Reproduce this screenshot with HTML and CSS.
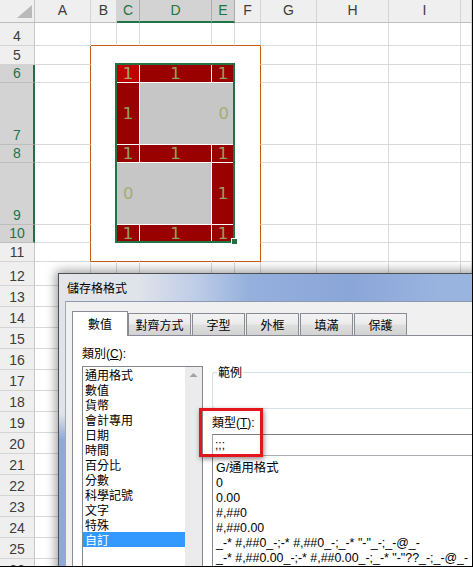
FILE: index.html
```html
<!DOCTYPE html>
<html lang="zh-Hant">
<head>
<meta charset="utf-8">
<title>儲存格格式</title>
<link rel="stylesheet" href="styles.css">
</head>
<body>
<div class="page">
  <div class="sheet">
    <div class="hd corner"><svg width="34" height="22" viewBox="0 0 34 22"><polygon points="32,5 32,18 17,18" fill="#b9b9b9"/></svg></div>
    <div class="hd">A</div><div class="hd">B</div><div class="hd on">C</div><div class="hd on">D</div><div class="hd on">E</div><div class="hd">F</div><div class="hd">G</div><div class="hd">H</div><div class="hd">I</div><div class="hd"></div>

    <div class="rh">4</div><i></i><i class="ob"></i><i class="ob"></i><i class="ob"></i><i class="ob"></i><i class="ob"></i><i></i><i></i><i></i><i></i>
    <div class="rh">5</div><i class="or"></i><i class="w"></i><i class="w"></i><i class="w"></i><i class="w"></i><i class="w or"></i><i></i><i></i><i></i><i></i>
    <div class="rh on">6</div><i class="or"></i><i class="w"></i><i class="v act">1</i><i class="v">1</i><i class="v">1</i><i class="w or"></i><i></i><i></i><i></i><i></i>
    <div class="rh on">7</div><i class="or"></i><i class="w"></i><i class="v">1</i><i class="v gy span2 to-right">0</i><i class="w or"></i><i></i><i></i><i></i><i></i>
    <div class="rh on">8</div><i class="or"></i><i class="w"></i><i class="v">1</i><i class="v">1</i><i class="v">1</i><i class="w or"></i><i></i><i></i><i></i><i></i>
    <div class="rh on">9</div><i class="or"></i><i class="w"></i><i class="v gy span2 to-left">0</i><i class="v">1</i><i class="w or"></i><i></i><i></i><i></i><i></i>
    <div class="rh on">10</div><i class="or"></i><i class="w"></i><i class="v">1</i><i class="v">1</i><i class="v">1</i><i class="w or"></i><i></i><i></i><i></i><i></i>
    <div class="rh">11</div><i class="or"></i><i class="w ob"></i><i class="w ob"></i><i class="w ob"></i><i class="w ob"></i><i class="w or ob"></i><i></i><i></i><i></i><i></i>
    <div class="rh">12</div><i></i><i></i><i></i><i></i><i></i><i></i><i></i><i></i><i></i><i></i>
    <div class="rh">13</div><i></i><i></i><i></i><i></i><i></i><i></i><i></i><i></i><i></i><i></i>
    <div class="rh">14</div><i></i><i></i><i></i><i></i><i></i><i></i><i></i><i></i><i></i><i></i>
    <div class="rh">15</div><i></i><i></i><i></i><i></i><i></i><i></i><i></i><i></i><i></i><i></i>
    <div class="rh">16</div><i></i><i></i><i></i><i></i><i></i><i></i><i></i><i></i><i></i><i></i>
    <div class="rh">17</div><i></i><i></i><i></i><i></i><i></i><i></i><i></i><i></i><i></i><i></i>
    <div class="rh">18</div><i></i><i></i><i></i><i></i><i></i><i></i><i></i><i></i><i></i><i></i>
    <div class="rh">19</div><i></i><i></i><i></i><i></i><i></i><i></i><i></i><i></i><i></i><i></i>
    <div class="rh">20</div><i></i><i></i><i></i><i></i><i></i><i></i><i></i><i></i><i></i><i></i>
    <div class="rh">21</div><i></i><i></i><i></i><i></i><i></i><i></i><i></i><i></i><i></i><i></i>
    <div class="rh">22</div><i></i><i></i><i></i><i></i><i></i><i></i><i></i><i></i><i></i><i></i>
    <div class="rh">23</div><i></i><i></i><i></i><i></i><i></i><i></i><i></i><i></i><i></i><i></i>
    <div class="rh">24</div><i></i><i></i><i></i><i></i><i></i><i></i><i></i><i></i><i></i><i></i>
    <div class="rh">25</div><i></i><i></i><i></i><i></i><i></i><i></i><i></i><i></i><i></i><i></i>
    <div class="rh">26</div><i></i><i></i><i></i><i></i><i></i><i></i><i></i><i></i><i></i><i></i>
  </div>

  <div class="selbox"></div>
  <div class="handle"></div>

  <div class="dlg">
    <div class="ttl">儲存格格式</div>
    <div class="client">
      <div class="tabs">
        <div class="tab on">數值</div>
        <div class="tab wide">對齊方式</div>
        <div class="tab">字型</div>
        <div class="tab">外框</div>
        <div class="tab">填滿</div>
        <div class="tab">保護</div>
      </div>
      <div class="panel">
        <div class="cat">
          <div class="lbl">類別(<u>C</u>):</div>
          <div class="list">
            <div class="items">
              <div>通用格式</div>
              <div>數值</div>
              <div>貨幣</div>
              <div>會計專用</div>
              <div>日期</div>
              <div>時間</div>
              <div>百分比</div>
              <div>分數</div>
              <div>科學記號</div>
              <div>文字</div>
              <div>特殊</div>
              <div class="on">自訂</div>
            </div>
            <div class="sb"><svg width="17" height="17" viewBox="0 0 17 17"><path d="M4.5 10 L8.5 6 L12.5 10 Z" fill="#a2a2a2"/></svg></div>
          </div>
        </div>
        <div class="typ">
          <div class="grp"><span>範例</span></div>
          <div class="lbl">類型(<u>T</u>):</div>
          <div class="inp">;;;</div>
          <div class="fmt">
            <div>G/通用格式</div>
            <div>0</div>
            <div>0.00</div>
            <div>#,##0</div>
            <div>#,##0.00</div>
            <div>_-* #,##0_-;-* #,##0_-;_-* "-"_-;_-@_-</div>
            <div>_-* #,##0.00_-;-* #,##0.00_-;_-* "-"??_-;_-@_-</div>
          </div>
        </div>
      </div>
    </div>
  </div>

  <div class="mark"></div>
</div>
</body>
</html>
```

FILE: styles.css
```css
* { box-sizing: border-box; margin: 0; padding: 0; }
body { margin: 0; background: #fff; font-family: "Liberation Sans", Arial, sans-serif; }

.page {
  position: relative;
  width: 473px;
  height: 567px;
  overflow: hidden;
  background: #fff;
  border-right: 1px solid #000;
  border-bottom: 1px solid #000;
}

/* ---------- spreadsheet ---------- */
.sheet {
  display: grid;
  grid-template-columns: 35px 56px 26px 23px 72px 23px 26px 56px 72px 72px 1fr;
  grid-template-rows: 23px 23px 19px 18px 62px 18px 62px 18px 19px 24px repeat(14, 21px);
}
.sheet > i {
  font-style: normal;
  background: #fff;
  border-right: 1px solid #d9d9d9;
  border-bottom: 1px solid #d9d9d9;
}

.hd {
  background: #efefef;
  border-right: 1px solid #d4d4d4;
  border-bottom: 1px solid #bdbdbd;
  color: #3c3c3c;
  font-size: 14px;
  display: flex;
  align-items: center;
  justify-content: center;
  padding-bottom: 2px;
}
.hd.corner { padding: 0; border-right-color: #c6c6c6; }
.hd.corner svg { display: block; }
.hd.on {
  background: #d3d3d3;
  color: #217346;
  border-right-color: #acacac;
  border-bottom: 2px solid #217346;
}

.rh {
  background: #efefef;
  border-right: 1px solid #c6c6c6;
  border-bottom: 1px solid #d4d4d4;
  color: #3c3c3c;
  font-size: 14px;
  line-height: 18px;
  display: flex;
  align-items: flex-end;
  justify-content: center;
}
.rh.on {
  background: #d3d3d3;
  color: #217346;
  border-bottom-color: #bdbdbd;
  border-right: 2px solid #217346;
  padding-left: 1px;
}

.sheet > i.w { border-color: #fff; }
.sheet > i.or { border-right-color: #c55a11; }
.sheet > i.ob { border-bottom-color: #c55a11; }

.sheet > i.v {
  background: #990000;
  border-color: #fff;
  color: #93a262;
  font-family: "DejaVu Sans", sans-serif;
  font-size: 16.5px;
  display: flex;
  align-items: center;
  justify-content: center;
}
.sheet > i.act { background: #c00000; color: #9cad6a; }
.sheet > i.gy { background: #c6c6c6; color: #a3ad74; }
.span2 { grid-column: span 2; }
.sheet > i.to-right { justify-content: flex-end; padding-right: 5px; }
.sheet > i.to-left { justify-content: flex-start; padding-left: 6px; }

.selbox {
  position: absolute;
  left: 115px;
  top: 63px;
  width: 120px;
  height: 180px;
  border: 2px solid #217346;
}
.handle {
  position: absolute;
  left: 231px;
  top: 238px;
  width: 7px;
  height: 7px;
  background: #217346;
  border: 1px solid #fff;
}

/* ---------- dialog ---------- */
.dlg {
  position: absolute;
  left: 58px;
  top: 273px;
  width: 432px;
  height: 320px;
  border: 1px solid #4d4f55;
  box-shadow: 0 0 10px 2px rgba(0, 0, 0, 0.4);
  background:
    linear-gradient(to right, #e3e5e9 0px, #dfe3ea 80px, #bccbe6 140px, #95b0dd 190px, #8aa6d8 290px, #9ab4e0 380px) top left / 100% 28px no-repeat,
    linear-gradient(to bottom, #e0e3e8 0px, #e0e3e8 140px, #90aad8 165px, #8ea9d8 100%);
  font-family: "Liberation Sans", "Noto Sans CJK TC", sans-serif;
  color: #000;
}
.ttl {
  height: 27px;
  line-height: 27px;
  padding-left: 8px;
  font-size: 12px;
  font-family: "Noto Sans CJK TC", sans-serif;
}
.client {
  margin-left: 6px;
  height: 300px;
  background: #f0f0f0;
  border-left: 1px solid #a3a6ab;
  border-top: 1px solid #8d99ae;
}

.tabs {
  position: relative;
  z-index: 1;
  display: flex;
  align-items: flex-end;
  height: 24px;
  margin: 9px 0 0 6px;
}
.tab {
  width: 53px;
  height: 22px;
  margin-left: 1px;
  border: 1px solid #898c95;
  border-bottom: none;
  background: linear-gradient(#f3f3f3, #ececec 45%, #dedede 55%, #d2d2d2);
  font-size: 12px;
  line-height: 21px;
  text-align: center;
  font-family: "Noto Sans CJK TC", sans-serif;
}
.tab.on {
  width: 56px;
  height: 25px;
  margin-left: 0;
  margin-bottom: -1px;
  background: #fff;
  line-height: 23px;
}
.tab.wide { width: 63px; margin-left: 0; }

.panel {
  display: flex;
  height: 300px;
  margin-left: 6px;
  border: 1px solid #898c95;
  background: #fff;
}

.lbl {
  font-size: 12px;
  line-height: 16px;
  white-space: nowrap;
}
.lbl u { text-underline-offset: 1px; }

.cat { padding-left: 9px; flex: none; }
.cat .lbl { margin-top: 10px; }
.list {
  display: flex;
  width: 121px;
  height: 230px;
  margin-top: 4px;
  border: 1px solid #828790;
}
.items {
  width: 102px;
  font-size: 12px;
  line-height: 15px;
  font-family: "Noto Sans CJK TC", sans-serif;
}
.items div { padding-left: 2px; white-space: nowrap; }
.items .on { background: #3399ff; color: #fff; }
.sb { width: 17px; background: #ebebeb; }
.sb svg { display: block; }

.typ { margin-left: 9px; width: 300px; flex: none; }
.grp {
  position: relative;
  height: 37px;
  margin-top: 36px;
  border: 1px solid #d5dfe5;
  border-right: none;
  border-radius: 3px 0 0 3px;
}
.grp span {
  position: absolute;
  left: 4px;
  top: -9px;
  padding: 0 1px;
  background: #fff;
  font-size: 12px;
  line-height: 16px;
  font-family: "Noto Sans CJK TC", sans-serif;
}
.typ .lbl { margin-top: 6px; }
.inp {
  height: 22px;
  margin-top: 3px;
  padding-left: 2px;
  border: 1px solid;
  border-color: #7a7c80 #abadb3 #abadb3 #a4a6aa;
  font-size: 12px;
  line-height: 20px;
}
.fmt {
  height: 200px;
  padding: 5px 0 0 3px;
  border-left: 1px solid #828790;
  font-size: 12.4px;
  line-height: 15px;
  white-space: nowrap;
}

.mark {
  position: absolute;
  left: 199px;
  top: 408px;
  width: 64px;
  height: 49px;
  border: 3px solid #e3151d;
  box-shadow: 1px 2px 5px rgba(0, 0, 0, 0.45);
}
```
